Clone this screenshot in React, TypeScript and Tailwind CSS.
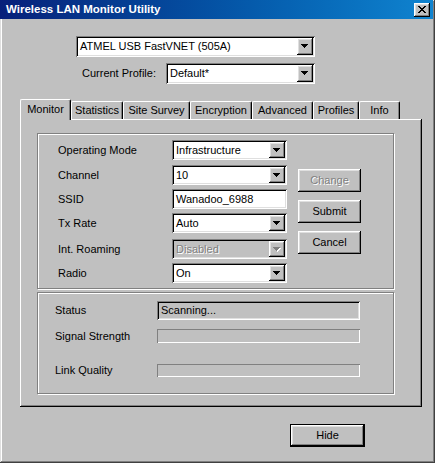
const raised =
  "shadow-[inset_-1px_-1px_#000,inset_1px_1px_#fff,inset_-2px_-2px_#808080,inset_2px_2px_#dfdfdf]"
const sunken =
  "shadow-[inset_1px_1px_#808080,inset_-1px_-1px_#fff,inset_2px_2px_#000,inset_-2px_-2px_#dfdfdf]"
const etched = "border border-[#808080] shadow-[inset_1px_1px_#fff,1px_1px_#fff]"
const grayText = "text-[#808080] [text-shadow:1px_1px_0_#fff]"

const tabs = [
  { label: "Monitor", w: "w-[51px]", active: true },
  { label: "Statistics", w: "w-[52px]" },
  { label: "Site Survey", w: "w-[67px]" },
  { label: "Encryption", w: "w-[62px]" },
  { label: "Advanced", w: "w-[61px]" },
  { label: "Profiles", w: "w-[46px]" },
  { label: "Info", w: "w-[41px]" },
]

const settings = [
  { label: "Operating Mode", value: "Infrastructure", kind: "combo", mt: "" },
  { label: "Channel", value: "10", kind: "combo", mt: "mt-[5px]" },
  { label: "SSID", value: "Wanadoo_6988", kind: "text", mt: "mt-[4px]" },
  { label: "Tx Rate", value: "Auto", kind: "combo", mt: "mt-[4px]" },
  { label: "Int. Roaming", value: "Disabled", kind: "disabled", mt: "mt-[6px]" },
  { label: "Radio", value: "On", kind: "combo", mt: "mt-[4px]" },
]

function Arrow({ disabled }: { disabled?: boolean }) {
  const d = "M0 0h7v1H0zM1 1h5v1H1zM2 2h3v1H2zM3 3h1v1H3z"
  return (
    <svg width="8" height="5" viewBox="0 0 8 5" shapeRendering="crispEdges">
      {disabled && <path d={d} fill="#fff" transform="translate(1 1)" />}
      <path d={d} fill={disabled ? "#808080" : "#000"} />
    </svg>
  )
}

function Combo({ value, className, disabled }: { value: string; className: string; disabled?: boolean }) {
  return (
    <div className={`${className} flex p-[2px] ${sunken} ${disabled ? "bg-[#c0c0c0]" : "bg-white"}`}>
      <span className={`flex-1 flex items-center pl-[2px] leading-none ${disabled ? grayText : ""}`}>{value}</span>
      <span className={`w-[16px] flex items-center justify-center bg-[#c0c0c0] ${raised}`}>
        <Arrow disabled={disabled} />
      </span>
    </div>
  )
}

function Button({ label, disabled }: { label: string; disabled?: boolean }) {
  return (
    <div className={`w-[63px] h-[23px] flex items-center justify-center bg-[#c0c0c0] ${raised} ${disabled ? grayText : ""}`}>
      {label}
    </div>
  )
}

export default function App() {
  return (
    <div className="w-[435px] h-[463px] bg-[#c0c0c0] flex flex-col text-[11px] text-black font-['Liberation_Sans',Arial,sans-serif] shadow-[inset_-1px_-1px_#404040,inset_1px_1px_#dfdfdf,inset_-2px_-2px_#808080,inset_2px_2px_#fff]">
      {/* title bar */}
      <div className="h-[19px] mr-[2px] flex items-center justify-between pl-[6px] pr-[3px] bg-linear-to-r from-[#08207a] to-[#1084d0]">
        <span className="text-white font-bold text-[11.5px] leading-none">Wireless LAN Monitor Utility</span>
        <span className={`w-[16px] h-[14px] flex items-center justify-center bg-[#c0c0c0] ${raised}`}>
          <svg width="8" height="7" viewBox="0 0 8 7" shapeRendering="crispEdges">
            <path
              d="M0 0h2v1H0zM6 0h2v1H6zM1 1h2v1H1zM5 1h2v1H5zM2 2h4v1H2zM3 3h2v1H3zM2 4h4v1H2zM1 5h2v1H1zM5 5h2v1H5zM0 6h2v1H0zM6 6h2v1H6z"
              fill="#000"
            />
          </svg>
        </span>
      </div>

      <Combo value="ATMEL USB FastVNET (505A)" className="ml-[76px] mt-[17px] w-[239px] h-[21px]" />

      <div className="ml-[82px] mt-[6px] flex items-center">
        <span className="w-[84px]">Current Profile:</span>
        <Combo value="Default*" className="w-[149px] h-[21px]" />
      </div>

      {/* tabs */}
      <div className="ml-[20px] mt-[15px] h-[20px] flex items-end">
        {tabs.map((t) =>
          t.active ? (
            <div
              key={t.label}
              className={`${t.w} h-[21px] -mb-[1px] relative z-10 flex items-center justify-center pb-[2px] bg-[#c0c0c0] border-l border-t border-r border-l-white border-t-white border-r-black rounded-t-[2px] shadow-[inset_-1px_0_#808080]`}
            >
              {t.label}
            </div>
          ) : (
            <div
              key={t.label}
              className={`${t.w} h-[18px] flex items-center justify-center bg-[#c0c0c0] border-l border-t border-r border-l-white border-t-white border-r-black rounded-t-[2px] shadow-[inset_-1px_0_#808080]`}
            >
              {t.label}
            </div>
          )
        )}
      </div>

      {/* tab panel */}
      <div className="ml-[20px] w-[402px] h-[288px] pl-[17px] pt-[14px] flex flex-col shadow-[inset_-1px_-1px_#000,inset_1px_1px_#fff,inset_-2px_-2px_#808080]">
        <div className={`w-[357px] h-[156px] flex ${etched}`}>
          <div className="pl-[20px] pt-[6px] flex flex-col">
            {settings.map((s) => (
              <div key={s.label} className={`flex items-center h-[20px] ${s.mt}`}>
                <span className="w-[114px]">{s.label}</span>
                {s.kind === "text" ? (
                  <div className={`w-[115px] h-[20px] flex items-center pl-[4px] bg-white ${sunken}`}>{s.value}</div>
                ) : (
                  <Combo value={s.value} className="w-[115px] h-[20px]" disabled={s.kind === "disabled"} />
                )}
              </div>
            ))}
          </div>
          <div className="ml-[11px] pt-[35px] flex flex-col gap-[8px]">
            <Button label="Change" disabled />
            <Button label="Submit" />
            <Button label="Cancel" />
          </div>
        </div>

        <div className={`mt-[3px] w-[357px] h-[102px] pl-[17px] pt-[8px] flex flex-col ${etched}`}>
          <div className="flex items-center h-[19px]">
            <span className="w-[102px]">Status</span>
            <div className={`w-[203px] h-[19px] flex items-center pl-[4px] ${sunken}`}>Scanning...</div>
          </div>
          <div className="flex items-center h-[14px] mt-[9px]">
            <span className="w-[102px]">Signal Strength</span>
            <div className="w-[203px] h-[14px] shadow-[inset_1px_1px_#808080,inset_-1px_-1px_#fff]" />
          </div>
          <div className="flex items-center h-[13px] mt-[21px]">
            <span className="w-[102px]">Link Quality</span>
            <div className="w-[203px] h-[13px] shadow-[inset_1px_1px_#808080,inset_-1px_-1px_#fff]" />
          </div>
        </div>
      </div>

      <div className="ml-[290px] mt-[17px] w-[75px] h-[23px] border border-black">
        <div className={`w-full h-full flex items-center justify-center ${raised}`}>Hide</div>
      </div>
    </div>
  )
}
